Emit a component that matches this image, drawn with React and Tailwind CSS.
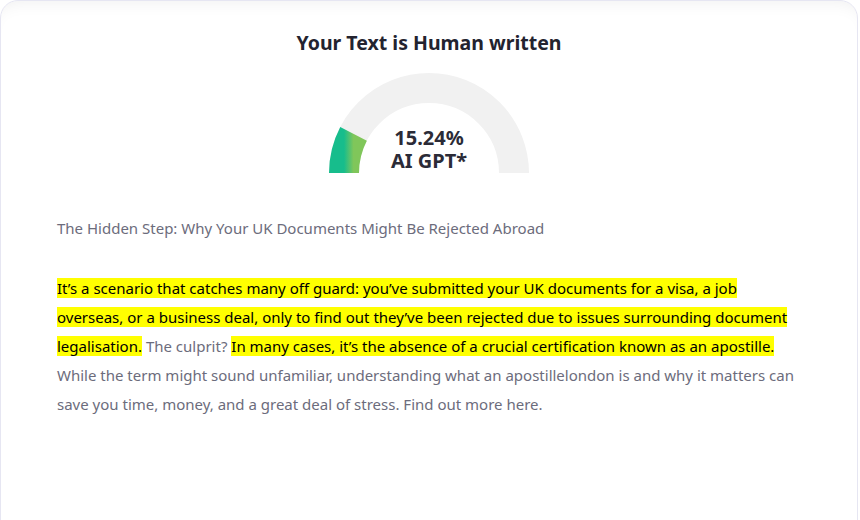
import React from "react";

const percent = 15.24;

// semicircle gauge, 0% on the left, 100% on the right
const Gauge = ({ value }) => {
  const r = 85;
  const cx = 100;
  const cy = 100;
  const angle = Math.PI - (value / 100) * Math.PI;
  const x = cx + r * Math.cos(angle);
  const y = cy - r * Math.sin(angle);

  return (
    <svg width="200" height="100" viewBox="0 0 200 100">
      <defs>
        <linearGradient id="gaugeFill" x1="0" y1="0" x2="1" y2="0">
          <stop offset="0%" stopColor="#17bd8c" />
          <stop offset="100%" stopColor="#80c65a" />
        </linearGradient>
      </defs>
      <path
        d={`M ${cx - r} ${cy} A ${r} ${r} 0 0 1 ${cx + r} ${cy}`}
        fill="none"
        stroke="#f1f1f1"
        strokeWidth="30"
      />
      <path
        d={`M ${cx - r} ${cy} A ${r} ${r} 0 0 1 ${x} ${y}`}
        fill="none"
        stroke="url(#gaugeFill)"
        strokeWidth="30"
      />
    </svg>
  );
};

const Mark = ({ children }) => (
  <span className="bg-[#ffff00] text-black">{children}</span>
);

export default function App() {
  return (
    <div className="h-[520px] w-[860px] overflow-hidden bg-white font-['Noto_Sans',sans-serif]">
      <div className="h-[540px] w-[858px] rounded-t-[18px] border border-[#e6e6f2] bg-white shadow-[inset_0_14px_18px_-14px_rgba(0,0,0,0.07)]">
        <div className="flex flex-col items-center pt-[28px]">
          <h1 className="text-[19.5px] font-bold leading-[28px] text-[#23232f]">
            Your Text is Human written
          </h1>
          <div className="relative mt-[16px]">
            <Gauge value={percent} />
            <div className="absolute inset-x-0 bottom-[1px] flex flex-col items-center text-[20px] font-bold leading-[23px] text-[#2b2b37]">
              <span>{percent}%</span>
              <span>AI GPT*</span>
            </div>
          </div>
        </div>

        <div className="px-[56px] pt-[41px] text-[15px] leading-[29px] text-[#6c6c7c]">
          <p>The Hidden Step: Why Your UK Documents Might Be Rejected Abroad</p>
          <p className="mt-[31px]">
            <Mark>
              It’s a scenario that catches many off guard: you’ve submitted your
              UK documents for a visa, a job overseas, or a business deal, only
              to find out they’ve been rejected due to issues surrounding
              document legalisation.
            </Mark>{" "}
            The culprit?{" "}
            <Mark>
              In many cases, it’s the absence of a crucial certification known as
              an apostille.
            </Mark>{" "}
            While the term might sound unfamiliar, understanding what an
            apostillelondon is and why it matters can save you time, money, and a
            great deal of stress. Find out more here.
          </p>
        </div>
      </div>
    </div>
  );
}
